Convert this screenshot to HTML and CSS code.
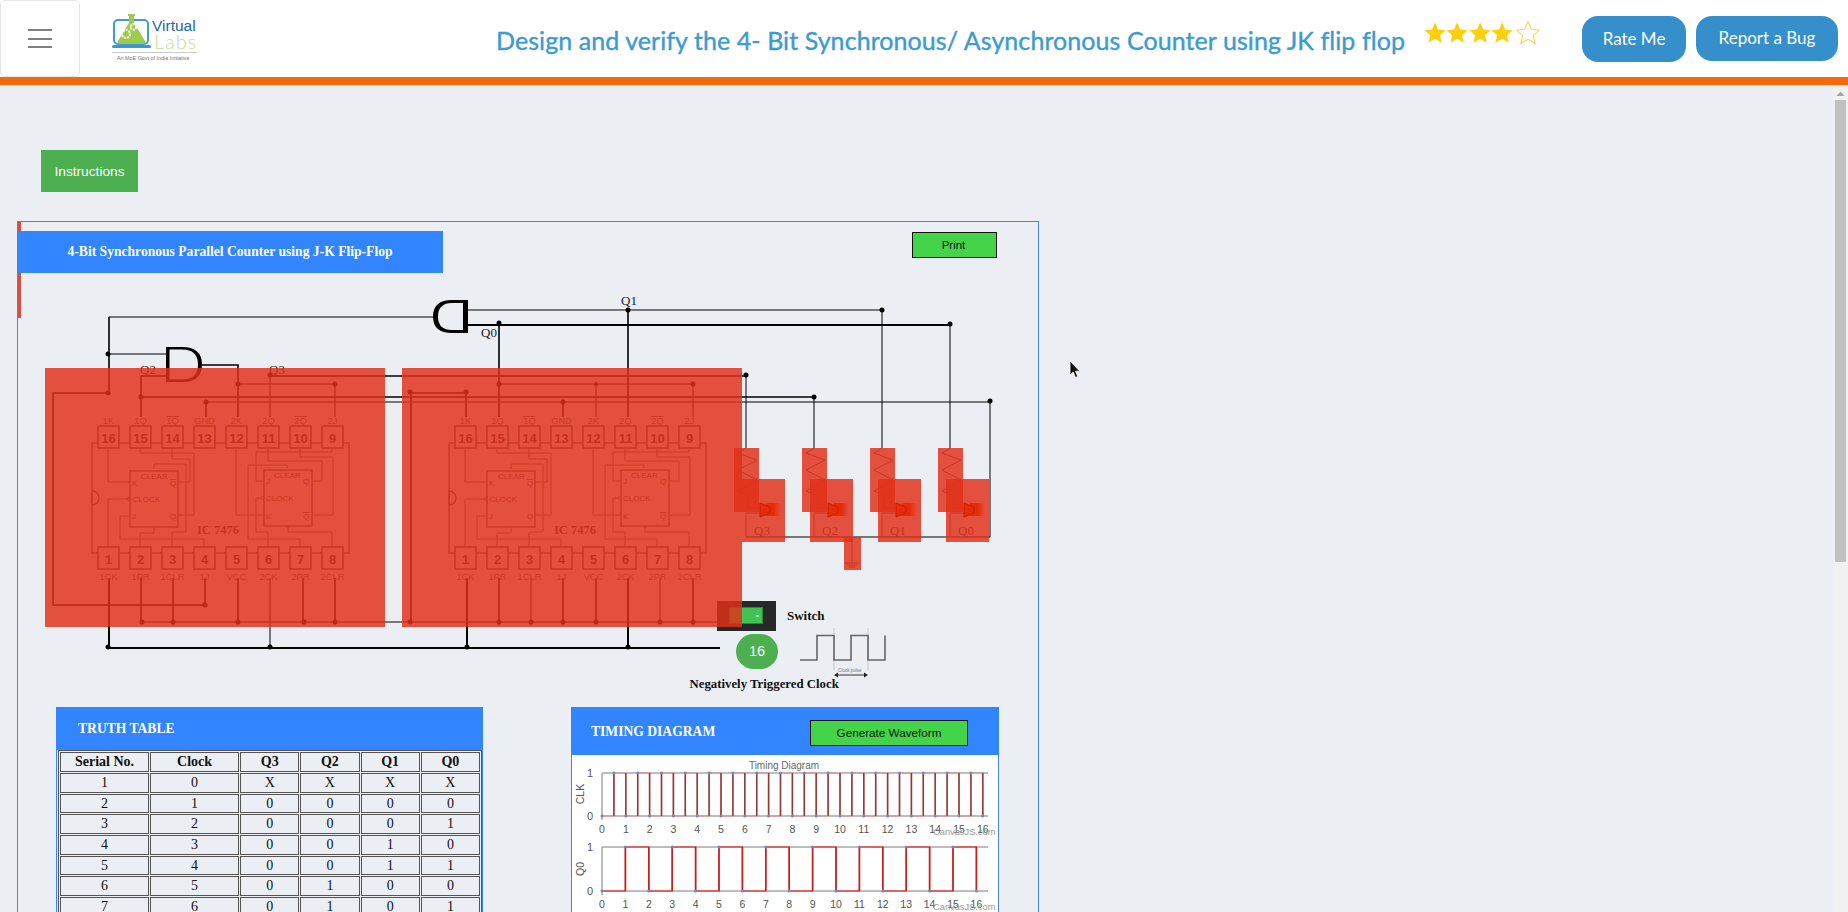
FILE: index.html
```html
<!DOCTYPE html>
<html lang="en">
<head>
<meta charset="utf-8">
<title>4-Bit Synchronous Counter</title>
<link rel="stylesheet" href="styles.css">
</head>
<body>
<header class="topbar">
  <button class="burger" aria-label="Menu"><span></span><span></span><span></span></button>
  <svg class="logo" viewBox="112 12 88 50" width="88" height="50">
    <rect class="logo-screen" x="114" y="20" width="34" height="24" rx="4"/>
    <rect class="logo-base" x="112" y="45" width="39" height="3" rx="1.5"/>
    <path class="logo-flask" d="M128 14h7v2h-1v7l11 18q1 3-2 3h-23q-3 0-2-3l11-18v-7h-1z"/>
    <circle class="logo-gear" cx="126" cy="34" r="4"/>
    <circle class="logo-gear" cx="133.5" cy="27" r="2.8"/>
    <text class="logo-virtual" x="152" y="31">Virtual</text>
    <text class="logo-labs" x="154" y="49">Labs</text>
    <line class="logo-rule" x1="112" y1="52.5" x2="197" y2="52.5"/>
    <text class="logo-tag" x="117" y="60">An MoE Govt of India Initiative</text>
  </svg>
  <h1 class="title">Design and verify the 4- Bit Synchronous/ Asynchronous Counter using JK flip flop</h1>
  <div class="top-right">
    <div class="stars">
      <svg class="star" viewBox="0 0 24 24"><polygon points="12,0.5 15.3,8.3 23.5,9 17.3,14.4 19.2,22.5 12,18.2 4.8,22.5 6.7,14.4 0.5,9 8.7,8.3"/></svg>
      <svg class="star" viewBox="0 0 24 24"><polygon points="12,0.5 15.3,8.3 23.5,9 17.3,14.4 19.2,22.5 12,18.2 4.8,22.5 6.7,14.4 0.5,9 8.7,8.3"/></svg>
      <svg class="star" viewBox="0 0 24 24"><polygon points="12,0.5 15.3,8.3 23.5,9 17.3,14.4 19.2,22.5 12,18.2 4.8,22.5 6.7,14.4 0.5,9 8.7,8.3"/></svg>
      <svg class="star" viewBox="0 0 24 24"><polygon points="12,0.5 15.3,8.3 23.5,9 17.3,14.4 19.2,22.5 12,18.2 4.8,22.5 6.7,14.4 0.5,9 8.7,8.3"/></svg>
      <svg class="star star-empty" viewBox="0 0 24 24"><polygon points="12,0.5 15.3,8.3 23.5,9 17.3,14.4 19.2,22.5 12,18.2 4.8,22.5 6.7,14.4 0.5,9 8.7,8.3"/></svg>
    </div>
    <a class="pill pill-rate">Rate Me</a>
    <a class="pill pill-report">Report a Bug</a>
  </div>
</header>
<div class="orange"></div>
<div class="workspace">
  <main class="content">
    <button class="instructions">Instructions</button>
    <section class="panel">
      <div class="panel-head">
        <h2 class="panel-title">4-Bit Synchronous Parallel Counter using J-K Flip-Flop</h2>
        <button class="green-btn print">Print</button>
      </div>
      <svg class="circuit" viewBox="18 280 1020 420" width="1020" height="420">
        <defs>
          <linearGradient id="glow">
            <stop offset="0" stop-color="#e92a08"/>
            <stop offset="0.5" stop-color="#e92a08"/>
            <stop offset="1" stop-color="#e92a08" stop-opacity="0"/>
          </linearGradient>
          <g id="ic-lines">
            <rect class="ic" x="92" y="443" width="257" height="110"/>
            <path class="ic-bg" d="M92 491a7 7 0 0 1 0 14z"/>
            <g class="pins">
              <rect x="98" y="426" width="21" height="22"/><rect x="130" y="426" width="21" height="22"/>
              <rect x="162" y="426" width="21" height="22"/><rect x="194" y="426" width="21" height="22"/>
              <rect x="226" y="426" width="21" height="22"/><rect x="258" y="426" width="21" height="22"/>
              <rect x="290" y="426" width="21" height="22"/><rect x="322" y="426" width="21" height="22"/>
              <rect x="98" y="547" width="21" height="22"/><rect x="130" y="547" width="21" height="22"/>
              <rect x="162" y="547" width="21" height="22"/><rect x="194" y="547" width="21" height="22"/>
              <rect x="226" y="547" width="21" height="22"/><rect x="258" y="547" width="21" height="22"/>
              <rect x="290" y="547" width="21" height="22"/><rect x="322" y="547" width="21" height="22"/>
            </g>
            <rect class="ic" x="130" y="471" width="48" height="56"/>
            <rect class="ic" x="264" y="470" width="48" height="56"/>
            <path class="ic-thin" d="M108 448V482H130M140 448V453H194V515H178M172 448V459H190V482H178M172 547V532H186V464H154V469M108 547V499H128M204 547V539H120V516H130M140 547V533H154V527"/>
            <path class="ic-thin" d="M236 448V515H264M268 448V461H322V481H312M300 448V457H333V515H312M332 448V452H256V481H264M268 547V532H256V498H261M300 547V539H248V465H287V468M332 547V532H288V526"/>
            <circle class="ic-thin" cx="129" cy="499" r="1.5"/>
            <circle class="ic-thin" cx="262.5" cy="498" r="1.5"/>
          </g>
          <g id="led">
            <polyline class="ic-dark" points="746,448 738,453 757,460 738,470 757,480 738,491 748,495 748,508 760,508"/>
            <path class="ic-dark" d="M760 513H746V537"/>
          </g>
          <g id="led-top">
            <rect fill="url(#glow)" x="766" y="503" width="15" height="13"/>
            <path class="led-head" d="M760 503L770 507V513L760 517z"/>
          </g>
        </defs>

        <path class="w1" d="M109 317H434M108 354H167M468 310H882M882 310V448M950 325V448M746 375V448M814 397V448M206 402H990V537H746M238 384H335V417M270 376V417M270 578V648M499 384H693V417M596 384V417M531 578V622M660 578V622M142 622H742"/>
        <path class="w2" d="M109 317V393M109 393H53V605H205V578M141 376H167M141 376V417M201 365H238V417M270 376H746M141 397H814M335 578V622M303 578V622M238 578V622M173 578V622M141 578V622M411 393V622M411 393H466V417M499 325V417M628 310V417M563 402V417M206 402V417M693 578V622M596 578V622M563 578V622M499 578V622"/>
        <path class="w3" d="M468 325H950M109 578V648H720M467 578V648M628 578V648"/>
        <g class="dots">
          <circle cx="108" cy="354" r="2.5"/><circle cx="108" cy="393" r="2.5"/><circle cx="141" cy="397" r="2.5"/>
          <circle cx="238" cy="384" r="2.5"/><circle cx="335" cy="384" r="2.5"/><circle cx="270" cy="375" r="2.5"/>
          <circle cx="206" cy="402" r="2.5"/><circle cx="205" cy="605" r="2.5"/><circle cx="108" cy="647" r="2.5"/>
          <circle cx="270" cy="647" r="2.5"/><circle cx="142" cy="622" r="2.5"/><circle cx="173" cy="622" r="2.5"/>
          <circle cx="238" cy="622" r="2.5"/><circle cx="304" cy="622" r="2.5"/><circle cx="335" cy="622" r="2.5"/>
          <circle cx="410" cy="392" r="2.5"/><circle cx="466" cy="392" r="2.5"/><circle cx="410" cy="622" r="2.5"/>
          <circle cx="467" cy="647" r="2.5"/><circle cx="628" cy="647" r="2.5"/><circle cx="499" cy="622" r="2.5"/>
          <circle cx="531" cy="622" r="2.5"/><circle cx="563" cy="622" r="2.5"/><circle cx="596" cy="622" r="2.5"/>
          <circle cx="660" cy="622" r="2.5"/><circle cx="693" cy="622" r="2.5"/><circle cx="499" cy="323" r="2.5"/>
          <circle cx="628" cy="310" r="2.5"/><circle cx="882" cy="310" r="2.5"/><circle cx="950" cy="324" r="2.5"/>
          <circle cx="499" cy="384" r="2.5"/><circle cx="693" cy="384" r="2.5"/><circle cx="596" cy="384" r="2"/>
          <circle cx="563" cy="402" r="2.5"/><circle cx="746" cy="375" r="2.5"/><circle cx="814" cy="397" r="2.5"/>
          <circle cx="990" cy="401" r="2.5"/>
        </g>
        <path class="gate" d="M166 347H182Q202 347 202 364.5Q202 382 182 382H166ZM169.5 349.5V379.5H182Q198 379.5 198 364.5Q198 349.5 182 349.5Z"/>
        <path class="gate" d="M468 300H452Q433 300 433 316.5Q433 333 452 333H468ZM463 303H452Q438 303 438 316.5Q438 330 452 330H463Z"/>
        <text class="wire-label" x="621" y="305">Q1</text>
        <text class="wire-label" x="481" y="337">Q0</text>
        <text class="wire-label" x="140" y="374">Q2</text>
        <text class="wire-label" x="269" y="374">Q3</text>

        <use href="#ic-lines"/>
        <use href="#ic-lines" x="357"/>
        <g>
          <g class="pin-no">
            <text x="108.5" y="443">16</text><text x="140.5" y="443">15</text><text x="172.5" y="443">14</text><text x="204.5" y="443">13</text>
            <text x="236.5" y="443">12</text><text x="268.5" y="443">11</text><text x="300.5" y="443">10</text><text x="332.5" y="443">9</text>
            <text x="108.5" y="564">1</text><text x="140.5" y="564">2</text><text x="172.5" y="564">3</text><text x="204.5" y="564">4</text>
            <text x="236.5" y="564">5</text><text x="268.5" y="564">6</text><text x="300.5" y="564">7</text><text x="332.5" y="564">8</text>
          </g>
          <g class="pin-lab">
            <text x="108.5" y="424">1K</text><text x="140.5" y="424">1Q</text><text class="over" x="172.5" y="424">1Q</text><text x="204.5" y="424">GND</text>
            <text x="236.5" y="424">2K</text><text x="268.5" y="424">2Q</text><text class="over" x="300.5" y="424">2Q</text><text x="332.5" y="424">2J</text>
            <text x="108.5" y="580">1CK</text><text x="140.5" y="580">1PR</text><text x="172.5" y="580">1CLR</text><text x="204.5" y="580">1J</text>
            <text x="236.5" y="580">VCC</text><text x="268.5" y="580">2CK</text><text x="300.5" y="580">2PR</text><text x="332.5" y="580">2CLR</text>
          </g>
          <g class="ff-lab">
            <text x="141" y="479">CLEAR</text><text x="132" y="486">K</text><text x="170" y="486" class="over">Q</text>
            <text x="132.5" y="502">CLOCK</text><text x="132" y="519">J</text><text x="170" y="519">Q</text>
            <text x="274" y="478">CLEAR</text><text x="266" y="484">J</text><text x="303" y="484">Q</text>
            <text x="266" y="501">CLOCK</text><text x="266" y="519">K</text><text x="303" y="519" class="over">Q</text>
          </g>
          <text class="ic-name" x="197" y="534">IC 7476</text>
        </g>
        <g transform="translate(357 0)">
          <g class="pin-no">
            <text x="108.5" y="443">16</text><text x="140.5" y="443">15</text><text x="172.5" y="443">14</text><text x="204.5" y="443">13</text>
            <text x="236.5" y="443">12</text><text x="268.5" y="443">11</text><text x="300.5" y="443">10</text><text x="332.5" y="443">9</text>
            <text x="108.5" y="564">1</text><text x="140.5" y="564">2</text><text x="172.5" y="564">3</text><text x="204.5" y="564">4</text>
            <text x="236.5" y="564">5</text><text x="268.5" y="564">6</text><text x="300.5" y="564">7</text><text x="332.5" y="564">8</text>
          </g>
          <g class="pin-lab">
            <text x="108.5" y="424">1K</text><text x="140.5" y="424">1Q</text><text class="over" x="172.5" y="424">1Q</text><text x="204.5" y="424">GND</text>
            <text x="236.5" y="424">2K</text><text x="268.5" y="424">2Q</text><text class="over" x="300.5" y="424">2Q</text><text x="332.5" y="424">2J</text>
            <text x="108.5" y="580">1CK</text><text x="140.5" y="580">1PR</text><text x="172.5" y="580">1CLR</text><text x="204.5" y="580">1J</text>
            <text x="236.5" y="580">VCC</text><text x="268.5" y="580">2CK</text><text x="300.5" y="580">2PR</text><text x="332.5" y="580">2CLR</text>
          </g>
          <g class="ff-lab">
            <text x="141" y="479">CLEAR</text><text x="132" y="486">K</text><text x="170" y="486" class="over">Q</text>
            <text x="132.5" y="502">CLOCK</text><text x="132" y="519">J</text><text x="170" y="519">Q</text>
            <text x="274" y="478">CLEAR</text><text x="266" y="484">J</text><text x="303" y="484">Q</text>
            <text x="266" y="501">CLOCK</text><text x="266" y="519">K</text><text x="303" y="519" class="over">Q</text>
          </g>
          <text class="ic-name" x="197" y="534">IC 7476</text>
        </g>

        <use href="#led"/><use href="#led" x="68"/><use href="#led" x="136"/><use href="#led" x="204"/>
        <text class="led-lab" x="762" y="535">Q3</text>
        <text class="led-lab" x="830" y="535">Q2</text>
        <text class="led-lab" x="898" y="535">Q1</text>
        <text class="led-lab" x="966" y="535">Q0</text>
        <path class="ic-dark" d="M852 537V563M845 563H859M847 565H857M849 567H855"/>

        <rect class="switch-box" x="717" y="601" width="59" height="30"/>
        <rect class="switch-on" x="729.5" y="607.5" width="33" height="16"/>
        <rect class="switch-dot" x="756.5" y="615" width="2" height="2"/>

        <g class="overlays">
          <rect x="45" y="368" width="340" height="259"/>
          <rect x="402" y="368" width="340" height="259"/>
          <rect x="734" y="448" width="25" height="64"/><rect x="802" y="448" width="25" height="64"/>
          <rect x="870" y="448" width="25" height="64"/><rect x="938" y="448" width="25" height="64"/>
          <rect x="742" y="479" width="43" height="63"/><rect x="810" y="479" width="43" height="63"/>
          <rect x="878" y="479" width="43" height="63"/><rect x="946" y="479" width="43" height="63"/>
          <rect x="844" y="537" width="17" height="33"/>
        </g>
        <use href="#led-top"/><use href="#led-top" x="68"/><use href="#led-top" x="136"/><use href="#led-top" x="204"/>

        <text class="bold-label" x="787" y="620">Switch</text>
        <rect class="counter" x="736" y="634" width="42" height="35" rx="17.5"/>
        <text class="counter-no" x="757" y="656">16</text>
        <path class="clock-guide" d="M834 628V670M868 628V670"/>
        <path class="clock-wave" d="M800 660H817V635.5H834V660H851V635.5H868V660H885V635.5"/>
        <path class="clock-arrow" d="M836 675H866"/>
        <path class="clock-head" d="M834 675L838 672.5V677.5zM868 675L864 672.5V677.5z"/>
        <text class="clock-note" x="850" y="672">Clock pulse</text>
        <text class="bold-label neg-label" x="689.5" y="688">Negatively Triggered Clock</text>
      </svg>

      <div class="lower">
        <section class="sub sub-truth">
          <h3 class="sub-title truth-title">TRUTH TABLE</h3>
          <table class="truth">
            <thead><tr><th class="c1">Serial No.</th><th class="c2">Clock</th><th class="c3">Q3</th><th class="c3">Q2</th><th class="c3">Q1</th><th class="c3">Q0</th></tr></thead>
            <tbody>
              <tr><td>1</td><td>0</td><td>X</td><td>X</td><td>X</td><td>X</td></tr>
              <tr><td>2</td><td>1</td><td>0</td><td>0</td><td>0</td><td>0</td></tr>
              <tr><td>3</td><td>2</td><td>0</td><td>0</td><td>0</td><td>1</td></tr>
              <tr><td>4</td><td>3</td><td>0</td><td>0</td><td>1</td><td>0</td></tr>
              <tr><td>5</td><td>4</td><td>0</td><td>0</td><td>1</td><td>1</td></tr>
              <tr><td>6</td><td>5</td><td>0</td><td>1</td><td>0</td><td>0</td></tr>
              <tr><td>7</td><td>6</td><td>0</td><td>1</td><td>0</td><td>1</td></tr>
            </tbody>
          </table>
        </section>
        <section class="sub sub-timing">
          <div class="timing-head">
            <h3 class="sub-title timing-title">TIMING DIAGRAM</h3>
            <button class="green-btn generate">Generate Waveform</button>
          </div>
          <svg class="chart" viewBox="572 755 425 160" width="425" height="160">
            <text class="chart-title" x="784" y="769">Timing Diagram</text>
            <path class="axis" d="M602 773H988M602 816H988M602 773V820M602 847H988M602 891H988M602 847V895"/>
            <path class="wave wave-clk" d="M602 816h11.9V773h11.9V816h11.9V773h11.9V816h11.9V773h11.9V816h11.9V773h11.9V816h11.9V773h11.9V816h11.9V773h11.9V816h11.9V773h11.9V816h11.9V773h11.9V816h11.9V773h11.9V816h11.9V773h11.9V816h11.9V773h11.9V816h11.9V773h11.9V816h11.9V773h11.9V816h11.9V773h11.9V816h11.9V773h11.9V816h11.9V773h11.9V816"/>
            <path class="wave wave-q" d="M602 891h23.4V847h23.4V891h23.4V847h23.4V891h23.4V847h23.4V891h23.4V847h23.4V891h23.4V847h23.4V891h23.4V847h23.4V891h23.4V847h23.4V891h23.4V847h23.4V891"/>
            <path class="risers risers-clk" d="M613.15 794.5H985"/>
            <path class="risers risers-q" d="M624.65 869H979"/>
            <path class="marks marks-clk" d="M602 816H985M613.9 773H985"/>
            <path class="marks marks-q" d="M625.4 847H980"/>
            <path class="marks marks-q" d="M602 891H980"/>
            <text class="y-num" x="593" y="777">1</text><text class="y-num" x="593" y="820">0</text>
            <text class="y-num" x="593" y="851">1</text><text class="y-num" x="593" y="895">0</text>
            <text class="y-lab" transform="translate(584 794) rotate(-90)">CLK</text>
            <text class="y-lab" transform="translate(584 869) rotate(-90)">Q0</text>
            <g class="x-num">
              <text x="602" y="833">0</text><text x="625.8" y="833">1</text><text x="649.6" y="833">2</text><text x="673.4" y="833">3</text><text x="697.2" y="833">4</text><text x="721" y="833">5</text><text x="744.8" y="833">6</text><text x="768.6" y="833">7</text><text x="792.4" y="833">8</text><text x="816.2" y="833">9</text><text x="840" y="833">10</text><text x="863.8" y="833">11</text><text x="887.6" y="833">12</text><text x="911.4" y="833">13</text><text x="935.2" y="833">14</text><text x="959" y="833">15</text><text x="982.8" y="833">16</text>
              <text x="602" y="908">0</text><text x="625.4" y="908">1</text><text x="648.8" y="908">2</text><text x="672.2" y="908">3</text><text x="695.6" y="908">4</text><text x="719" y="908">5</text><text x="742.4" y="908">6</text><text x="765.8" y="908">7</text><text x="789.2" y="908">8</text><text x="812.6" y="908">9</text><text x="836" y="908">10</text><text x="859.4" y="908">11</text><text x="882.8" y="908">12</text><text x="906.2" y="908">13</text><text x="929.6" y="908">14</text><text x="953" y="908">15</text><text x="976.4" y="908">16</text>
            </g>
            <text class="credit" x="933" y="835">CanvasJS.com</text>
            <text class="credit" x="933" y="910">CanvasJS.com</text>
          </svg>
        </section>
      </div>
    </section>
  </main>
  <aside class="scrollbar">
    <svg class="scroll-arrow" viewBox="0 0 15 15" width="15" height="15"><path d="M3.5 11L7.5 6.5L11.5 11z"/></svg>
    <div class="scroll-thumb"></div>
  </aside>
  <svg class="cursor" viewBox="0 0 12 19" width="12" height="19"><path d="M1 1V15L4.2 12L6.5 17.5L8.8 16.5L6.5 11.2H10.8z"/></svg>
</div>
</body>
</html>
```

FILE: styles.css
```css
* { box-sizing: border-box; }
html, body { margin: 0; padding: 0; }
body {
  width: 1848px;
  height: 912px;
  overflow: hidden;
  display: flex;
  flex-direction: column;
  background: #ebeef3;
  font-family: "Liberation Serif", serif;
  color: #000;
}

/* top bar */
.topbar {
  height: 77px;
  display: flex;
  align-items: flex-start;
  background: #fff;
  flex: none;
}
.burger {
  width: 80px;
  height: 77px;
  flex: none;
  padding: 0;
  background: #fff;
  border: 1px solid #e6e6e6;
  border-radius: 5px;
  display: flex;
  flex-direction: column;
  align-items: center;
  justify-content: center;
  gap: 6.5px;
}
.burger span { display: block; width: 24px; height: 2px; background: #7f7f7f; }
.logo { margin: 12px 0 0 32px; flex: none; }
.logo-screen { fill: none; stroke: #3f9bd2; stroke-width: 2; }
.logo-base { fill: #3b97cf; }
.logo-flask { fill: #9ccb4d; }
.logo-gear { fill: none; stroke: #fff; stroke-width: 2; stroke-dasharray: 2 1; }
.logo-virtual { font: 15.5px "Liberation Sans", sans-serif; fill: #26689b; }
.logo-labs { font: 300 20px "Lato", sans-serif; letter-spacing: 1px; fill: #c3dd9b; }
.logo-rule { stroke: #c9c9c9; stroke-width: 1; }
.logo-tag { font: 5.4px "Liberation Sans", sans-serif; fill: #777; }
.title {
  margin: 24px 0 0 296px;
  font: 400 25px/32px "Lato", sans-serif;
  letter-spacing: 0.07px;
  -webkit-text-stroke: 0.4px #3d9bd0;
  color: #3d9bd0;
  white-space: nowrap;
}
.top-right {
  margin-left: auto;
  padding-right: 10px;
  display: flex;
  align-items: flex-start;
}
.stars { display: flex; margin: 21px 42px 0 0; }
.star { width: 22.2px; height: 24px; fill: #ffcf0f; }
.star-empty { width: 24px; fill: none; stroke: #f8d568; stroke-width: 1.2; margin-left: 3px; }
.pill {
  height: 46px;
  margin-top: 16px;
  padding-bottom: 2px;
  display: flex;
  align-items: center;
  justify-content: center;
  background: #348fca;
  border-radius: 16px;
  color: #fff;
  font: 17px "Lato", sans-serif;
}
.pill-rate { margin-right: 10px; width: 104px; }
.pill-report { width: 142px; height: 45px; }
.orange { height: 8px; background: #f5690b; flex: none; }

/* workspace */
.workspace { flex: 1; min-height: 0; display: flex; position: relative; }
.content { flex: 1; min-width: 0; overflow: hidden; padding: 65px 0 0 17px; }
.instructions {
  display: block;
  width: 97px;
  height: 42px;
  margin: 0 0 29px 24px;
  padding: 0;
  background: #4caf50;
  border: 0;
  color: #fff;
  font: 13.7px "Liberation Sans", sans-serif;
}
.panel {
  width: 1022px;
  height: 800px;
  position: relative;
  border: 1px solid #4a86d0;
  padding-top: 9px;
}
.panel::before {
  content: "";
  position: absolute;
  left: 0;
  top: 0;
  width: 3px;
  height: 96px;
  background: #cf5244;
}
.panel-head { display: flex; justify-content: space-between; align-items: flex-start; height: 49px; position: relative; }
.panel-title {
  width: 426px;
  height: 42px;
  margin: 0 0 0 -1px;
  background: #3385ff;
  color: #fff;
  font: bold 13.6px/41px "Liberation Serif", serif;
  text-align: center;
}
.green-btn {
  padding: 0;
  background: #44d44a;
  border: 1px solid #111;
  color: #111;
  font-family: "Liberation Sans", sans-serif;
}
.print { width: 85px; height: 26px; margin: 1px 41px 0 0; padding-right: 2px; font-size: 11.5px; }
.circuit { display: block; }

/* circuit drawing */
.w1, .w2, .w3, .ic, .ic-thin, .ic-dark { fill: none; }
.w1 { stroke: #000; stroke-width: 1; }
.w2 { stroke: #000; stroke-width: 1.6; }
.w3 { stroke: #000; stroke-width: 2; }
.dots { fill: #000; }
.gate { fill: #000; fill-rule: evenodd; }
.wire-label { font: 13px "Liberation Serif", serif; fill: #222; }
.ic { stroke: #555; stroke-width: 1.3; }
.ic-bg { fill: none; stroke: #555; stroke-width: 1.3; }
.pins rect { fill: #ebeef3; stroke: #555; stroke-width: 1.5; }
.ic-thin { stroke: #666; stroke-width: 1; }
.ic-dark { stroke: #555; stroke-width: 1; fill: none; }
.pin-no text { font: bold 13px "Liberation Sans", sans-serif; fill: #333; text-anchor: middle; }
.pin-lab text { font: 9.3px "Liberation Sans", sans-serif; fill: #666; text-anchor: middle; }
.ff-lab text { font: 8px "Liberation Sans", sans-serif; fill: #555; }
.over { text-decoration: overline; }
.ic-name { font: bold 12.5px "Liberation Serif", serif; fill: #444; }
.led-lab { font: 13px "Liberation Serif", serif; fill: #444; text-anchor: middle; }
.switch-box { fill: #262829; }
.switch-on { fill: #41c352; stroke: #2b8a3a; }
.switch-dot { fill: #fff; }
.overlays rect { fill: rgba(225, 48, 24, 0.83); }
.led-head { fill: #e92a08; stroke: #c22308; stroke-width: 1; }
.bold-label { font: bold 13px "Liberation Serif", serif; fill: #111; }
.neg-label { font-size: 12.8px; }
.counter { fill: #4caf50; }
.counter-no { font: 14.5px "Liberation Sans", sans-serif; fill: #fff; text-anchor: middle; }
.clock-guide { stroke: #c4c7cc; stroke-width: 1; fill: none; }
.clock-wave { stroke: #666; stroke-width: 1.6; fill: none; }
.clock-arrow { stroke: #333; stroke-width: 1; fill: none; }
.clock-head { fill: #222; }
.clock-note { font: 4.5px "Liberation Sans", sans-serif; fill: #777; text-anchor: middle; }

/* lower boxes */
.lower { display: flex; margin: 7px 0 0 38px; gap: 88px; align-items: flex-start; }
.sub { border: 1px solid #3385ff; border-top: 0; }
.sub-truth { width: 427px; }
.sub-timing { width: 428px; border-color: #4a86d0; background: #fff; }
.sub-title { margin: 0; color: #fff; font: bold 13.6px/20px "Liberation Serif", serif; }
.truth-title { height: 43px; margin: 0 -1px; padding: 12px 0 0 22px; background: #3385ff; }
.truth {
  width: 424px;
  margin-left: 1px;
  table-layout: fixed;
  border-collapse: separate;
  border-spacing: 1px;
  border: 1px solid #555;
  font-size: 14px;
  text-align: center;
  background: #ebeef3;
  color: #111;
}
.truth th, .truth td { padding: 0; border: 1px solid #555; line-height: 17.67px; }
.truth th { line-height: 18px; }
.c1 { width: 89px; }
.c2 { width: 89px; }
.c3 { width: 59.2px; }
.timing-head {
  height: 48px;
  margin: 0 -1px;
  padding: 13px 31px 0 20px;
  background: #3385ff;
  display: flex;
  justify-content: space-between;
  align-items: flex-start;
}
.timing-title { margin-top: 2px; }
.generate { width: 158px; height: 26px; padding-bottom: 2px; font-size: 11.7px; }
.chart { display: block; }

/* chart */
.chart-title { font: 10px "Liberation Sans", sans-serif; fill: #666; text-anchor: middle; }
.axis { fill: none; stroke: #a8a8a8; stroke-width: 1.5; }
.wave { fill: none; stroke-width: 1.5; }
.wave-clk { stroke: #dd9a9a; }
.wave-q { stroke: #e54848; }
.risers { fill: none; }
.risers-clk { stroke: #8f3a3a; stroke-width: 43; stroke-dasharray: 1.5 10.4; }
.risers-q { stroke: #c41f1f; stroke-width: 44; stroke-dasharray: 1.5 21.9; }
.marks { fill: none; stroke: #6b8cbe; stroke-width: 3; stroke-linecap: round; }
.marks-clk { stroke-dasharray: 0 23.8; }
.marks-q { stroke-dasharray: 0 46.8; }
.y-num { font: 11px "Liberation Sans", sans-serif; fill: #555; text-anchor: end; }
.y-lab { font: 10.5px "Liberation Sans", sans-serif; fill: #555; text-anchor: middle; }
.x-num text { font: 10.5px "Liberation Sans", sans-serif; fill: #555; text-anchor: middle; }
.credit { font: 9.3px "Liberation Sans", sans-serif; fill: #999; }

/* scrollbar and pointer */
.scrollbar { width: 15px; flex: none; background: #f1f1f1; }
.scroll-arrow { display: block; fill: #a3a3a3; }
.scroll-thumb { width: 11px; height: 462px; margin: 0 0 0 2px; background: #c1c1c1; }
.cursor { position: absolute; left: 1069px; top: 275px; fill: #111; stroke: #fff; stroke-width: 0.8; }
```
